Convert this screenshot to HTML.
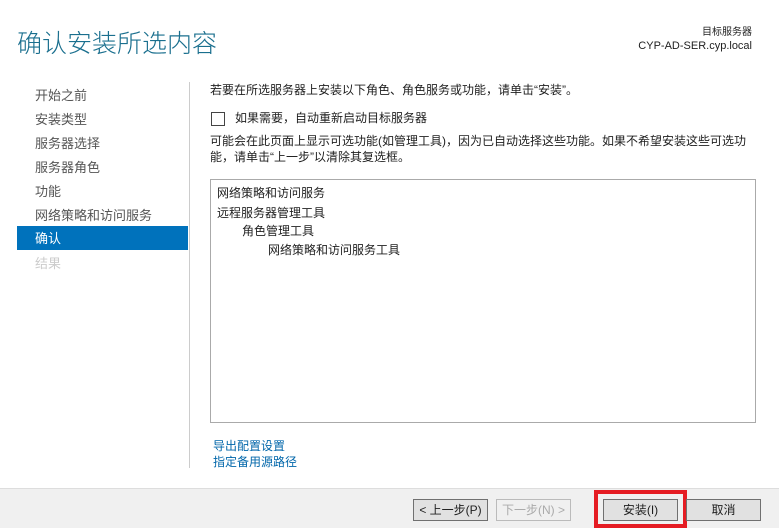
<!DOCTYPE html>
<html><head><meta charset="utf-8"><style>
*{margin:0;padding:0;box-sizing:border-box}
body{width:779px;height:528px;background:#fff;font-family:"Liberation Sans","Noto Sans CJK SC",sans-serif;font-size:12px;color:#1e1e1e;position:relative;overflow:hidden}
.a{position:absolute;white-space:nowrap;line-height:1.2}
.title{left:17px;top:29px;font-size:25px;color:#1a6f8e;font-weight:300}
.nav{left:35px;font-size:13px;color:#555}
.sel{left:17px;top:226px;width:171px;height:24px;background:#0072bc}
.btn{position:absolute;top:499px;height:22px;border:1px solid #707070;background:#e1e1e1;font-size:12px;text-align:center;line-height:20px}
</style></head><body>
<div class="a title">确认安装所选内容</div>
<div class="a" style="right:27px;top:27px;font-size:10px">目标服务器</div>
<div class="a" style="right:27px;top:40px;font-size:11px">CYP-AD-SER.cyp.local</div>
<div class="a nav" style="top:88px">开始之前</div>
<div class="a nav" style="top:112px">安装类型</div>
<div class="a nav" style="top:136px">服务器选择</div>
<div class="a nav" style="top:160px">服务器角色</div>
<div class="a nav" style="top:184px">功能</div>
<div class="a nav" style="top:208px">网络策略和访问服务</div>
<div class="a sel"></div>
<div class="a nav" style="top:231px;color:#fff">确认</div>
<div class="a nav" style="top:256px;color:#ccc">结果</div>
<div class="a" style="left:189px;top:82px;width:1px;height:386px;background:#ccc"></div>
<div class="a" style="left:210px;top:83px">若要在所选服务器上安装以下角色、角色服务或功能，请单击“安装”。</div>
<div class="a" style="left:211px;top:112px;width:14px;height:14px;border:1px solid #444"></div>
<div class="a" style="left:235px;top:111px">如果需要，自动重新启动目标服务器</div>
<div class="a" style="left:210px;top:133px;line-height:16px">可能会在此页面上显示可选功能(如管理工具)，因为已自动选择这些功能。如果不希望安装这些可选功<br>能，请单击“上一步”以清除其复选框。</div>
<div class="a" style="left:210px;top:179px;width:546px;height:244px;border:1px solid #aaa"></div>
<div class="a" style="left:217px;top:186px">网络策略和访问服务</div>
<div class="a" style="left:217px;top:206px">远程服务器管理工具</div>
<div class="a" style="left:242px;top:224px">角色管理工具</div>
<div class="a" style="left:268px;top:243px">网络策略和访问服务工具</div>
<div class="a" style="left:213px;top:439px;color:#0066aa">导出配置设置</div>
<div class="a" style="left:213px;top:455px;color:#0066aa">指定备用源路径</div>
<div class="a" style="left:0;top:488px;width:779px;height:40px;background:#f0f0f0;border-top:1px solid #ddd"></div>
<div class="btn" style="left:413px;width:75px">&lt; 上一步(P)</div>
<div class="btn" style="left:496px;width:75px;border-color:#bbb;background:#f0f0f0;color:#aaa">下一步(N) &gt;</div>
<div class="a" style="left:594px;top:490px;width:93px;height:38px;border:4px solid #e51c23"></div>
<div class="btn" style="left:603px;width:75px">安装(I)</div>
<div class="btn" style="left:686px;width:75px">取消</div>
</body></html>
